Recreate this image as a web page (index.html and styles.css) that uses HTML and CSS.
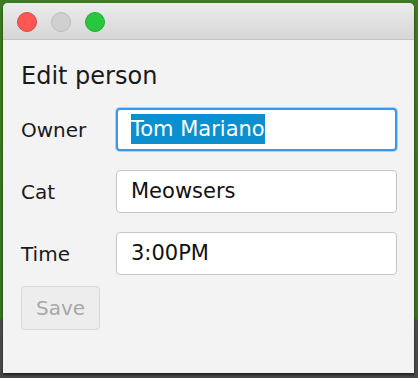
FILE: index.html
```html
<!DOCTYPE html>
<html lang="en">
<head>
    <meta charset="UTF-8">
    <title>Edit person</title>
    <link rel="stylesheet" href="styles.css">
</head>
<body>
    <div class="window">
        <div class="titlebar">
            <span class="light close"></span>
            <span class="light mini"></span>
            <span class="light zoom"></span>
        </div>
        <div class="content">
            <h1>Edit person</h1>
            <div class="form">
                <label>Owner</label>
                <div class="field focused"><span class="selected">Tom Mariano</span></div>
                <label>Cat</label>
                <div class="field">Meowsers</div>
                <label>Time</label>
                <div class="field">3:00PM</div>
            </div>
            <button class="save" disabled>Save</button>
        </div>
    </div>
</body>
</html>
```

FILE: styles.css
```css
html, body {
    margin: 0;
    height: 100%;
}
body {
    background: linear-gradient(#3c7d22 0, #3a7620 84%, #4d4d4d 85%, #4a4a4a 100%);
    font-family: "DejaVu Sans", "Liberation Sans", sans-serif;
    overflow: hidden;
}
.window {
    position: relative;
    top: 3px;
    left: 3px;
    width: 411px;
    height: 370px;
    background: #f3f3f3;
    border-radius: 5px 5px 0 0;
    box-shadow: 0 2px 3px rgba(0, 0, 0, 0.6);
}
.titlebar {
    height: 36px;
    border-bottom: 1px solid #c4c4c4;
    border-radius: 5px 5px 0 0;
    background: linear-gradient(#ececec, #d6d6d6);
    display: flex;
    align-items: center;
    gap: 14px;
    padding-left: 14px;
}
.light {
    width: 20px;
    height: 20px;
    border-radius: 50%;
    box-sizing: border-box;
    margin-top: 2px;
}
.close { background: #fc5753; border: 1px solid #de4541; }
.mini { background: #d0d0d0; border: 1px solid #bdbdbd; }
.zoom { background: #29c73f; border: 1px solid #1eab2d; }
.content {
    padding: 21px 18px 0;
}
h1 {
    margin: 0 0 17px;
    font-size: 24px;
    font-weight: normal;
    line-height: 30px;
    color: #1a1a1a;
}
.form {
    display: grid;
    grid-template-columns: 95px 281px;
    row-gap: 19px;
    align-items: center;
}
label {
    font-size: 20px;
    color: #1a1a1a;
}
.field {
    height: 43px;
    box-sizing: border-box;
    border: 1px solid #c6c6c6;
    border-radius: 4px;
    background: #fff;
    padding-left: 14px;
    font-size: 21px;
    line-height: 41px;
    color: #111;
}
.focused {
    border: 2px solid #3a98e8;
    box-shadow: 0 0 0 1px #a9d2f6;
    line-height: 39px;
    padding-left: 13px;
}
.selected {
    background: #0b8fcf;
    color: #fff;
    padding: 3px 0;
}
.save {
    margin-top: 11px;
    width: 79px;
    height: 44px;
    border: 1px solid #d8d8d8;
    border-radius: 4px;
    background: #ededed;
    color: #a8a8a8;
    font-family: inherit;
    font-size: 20px;
}
```
